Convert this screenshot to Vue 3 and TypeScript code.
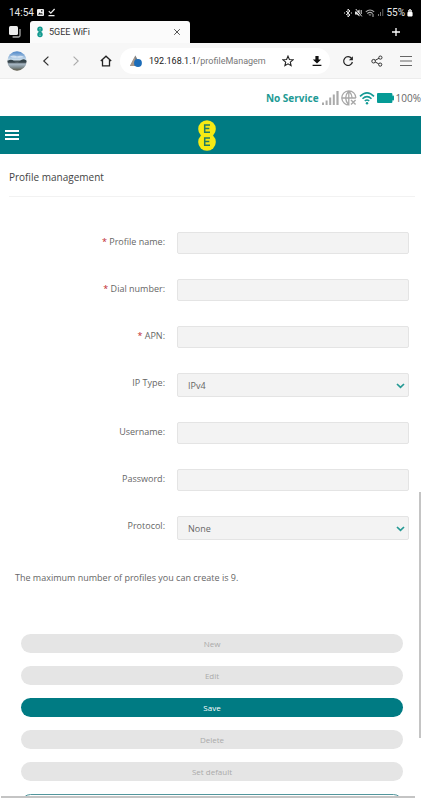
<script setup lang="ts">
import { reactive } from 'vue'

interface Field {
  id: string
  label: string
  required?: boolean
  options?: string[]
}

const fields: Field[] = [
  { id: 'profileName', label: 'Profile name:', required: true },
  { id: 'dialNumber', label: 'Dial number:', required: true },
  { id: 'apn', label: 'APN:', required: true },
  { id: 'ipType', label: 'IP Type:', options: ['IPv4'] },
  { id: 'username', label: 'Username:' },
  { id: 'password', label: 'Password:' },
  { id: 'protocol', label: 'Protocol:', options: ['None'] },
]

const values = reactive<Record<string, string>>({
  profileName: '',
  dialNumber: '',
  apn: '',
  ipType: 'IPv4',
  username: '',
  password: '',
  protocol: 'None',
})

const actions = [
  { label: 'New', kind: 'disabled' },
  { label: 'Edit', kind: 'disabled' },
  { label: 'Save', kind: 'primary' },
  { label: 'Delete', kind: 'disabled' },
  { label: 'Set default', kind: 'disabled' },
  { label: '', kind: 'outline' },
]
</script>

<template>
  <div class="screen">
    <div class="status">
      <span>14:54</span>
      <svg width="9" height="9" viewBox="0 0 9 9"><rect x="1" y="1" width="7" height="7" rx="1" fill="#eee" /><path d="M2 6.6 3.6 4.4 5 5.8 5.8 5 7 6.6z" fill="#111" /><rect x="5" y="2.2" width="1.4" height="1.4" fill="#111" /></svg>
      <svg width="9" height="9" viewBox="0 0 9 9" fill="none" stroke="#eee" stroke-width="1.2"><path d="M1.8 3.2 3.8 5.2 7.6 1M1.5 7.7h6" /></svg>
      <span class="spacer"></span>
      <svg width="8" height="10" viewBox="0 0 8 10" fill="none" stroke="#ddd" stroke-width="1"><path d="M2 3l4 4-2 2V1l2 2-4 4" /><path d="M.6 4.4v1.2M7.4 4.4v1.2" /></svg>
      <svg width="9" height="10" viewBox="0 0 9 10"><path d="M1 3.6h2L5.6 1.6v6.8L3 6.4H1z" fill="#ddd" /><path d="M1 1l6.6 8" stroke="#000" stroke-width="1" /><path d="M1.8 1l6 7.4M7.2 2v4" stroke="#ddd" stroke-width="1" /></svg>
      <svg width="10" height="10" viewBox="0 0 10 10" fill="none" stroke="#aaa" stroke-width="1.1"><path d="M.8 3.8Q5 .2 9.2 3.8M2.3 5.6Q5 3.2 7.7 5.6M3.8 7.2Q5 6.2 6.2 7.2" /><path d="M8 6v3" /></svg>
      <svg width="7" height="9" viewBox="0 0 7 9" fill="#777"><path d="M1 6h1v2H1zM3 4h1v4H3zM5.4 1h.8v7h-.8z" /></svg>
      <span>55%</span>
      <svg width="6" height="9" viewBox="0 0 6 9"><path d="M2 1h2v1h1v2H1V2h1z" fill="#bbb" /><rect x=".4" y="4" width="5.2" height="4.4" rx=".8" fill="#fff" /></svg>
    </div>

    <div class="tabs">
      <button class="icon-btn windows" aria-label="Tabs">
        <svg width="14" height="14" viewBox="0 0 14 14"><path d="M12 4v6.5q0 1.5-1.5 1.5H4.6" fill="none" stroke="#aaa" stroke-width="1.3" /><rect x="1" y="1" width="9" height="9" rx="1.5" fill="#eee" /></svg>
      </button>
      <div class="tab">
        <svg width="8" height="12" viewBox="0 0 8 12"><circle cx="4" cy="3.3" r="2.7" fill="#10998f" /><circle cx="4" cy="8.5" r="2.7" fill="#10998f" /><path d="M3 2.5h2M3 4h2M3 8h2M3 9.5h2" stroke="#86ccc4" stroke-width=".6" /></svg>
        <span class="tab-title">5GEE WiFi</span>
        <button class="icon-btn" aria-label="Close tab">
          <svg width="8" height="8" viewBox="0 0 8 8" stroke="#555" stroke-width="1"><path d="M1.2 1.2l5.6 5.6M6.8 1.2 1.2 6.8" /></svg>
        </button>
      </div>
      <button class="icon-btn plus" aria-label="New tab">
        <svg width="10" height="10" viewBox="0 0 10 10" stroke="#fff" stroke-width="1.3"><path d="M5 1v8M1 5h8" /></svg>
      </button>
    </div>

    <div class="toolbar">
      <button class="icon-btn avatar" aria-label="Profile">
        <svg width="20" height="20" viewBox="0 0 20 20">
          <defs>
            <linearGradient id="lake" x1="0" y1="0" x2="0" y2="1">
              <stop offset="0" stop-color="#4d86c8" /><stop offset=".45" stop-color="#cfe0ec" /><stop offset=".5" stop-color="#3c4a50" /><stop offset=".58" stop-color="#5d6a70" /><stop offset=".66" stop-color="#a9b9c6" /><stop offset=".82" stop-color="#7f8d92" /><stop offset="1" stop-color="#5b5746" />
            </linearGradient>
          </defs>
          <circle cx="10" cy="10" r="9.7" fill="url(#lake)" />
          <path d="M1 10Q4 7.5 7 10.3T13 10t6-.8v2.3H1z" fill="#34434a" />
          <path d="M3 5.5q4-2 7 0 4-1.6 7 .6-4 1-7 .4-4 .8-7-1z" fill="#fff" opacity=".55" />
        </svg>
      </button>
      <button class="icon-btn" aria-label="Back"><svg width="12" height="12" viewBox="0 0 12 12" fill="none" stroke="#333" stroke-width="1.2"><path d="M8.4 1.6 3.8 6l4.6 4.4" /></svg></button>
      <button class="icon-btn" aria-label="Forward"><svg width="12" height="12" viewBox="0 0 12 12" fill="none" stroke="#aaa" stroke-width="1.1"><path d="M3.6 1.6 8.2 6l-4.6 4.4" /></svg></button>
      <button class="icon-btn" aria-label="Home"><svg width="12" height="12" viewBox="0 0 12 12" fill="none" stroke="#222" stroke-width="1.3"><path d="M.8 6 6 1.2 11.2 6M2.5 5v5.9h7V5" /></svg></button>
      <div class="address">
        <svg width="14" height="14" viewBox="0 0 14 14"><path d="M6.4 1.5 12 12H1z" fill="#7b8288" /><path d="M6.4 1.5 3.2 7.6 1 12h4z" fill="#a8988b" /><circle cx="9" cy="9" r="3.9" fill="#1c6cb8" /></svg>
        <span class="url"><span class="host">192.168.1.1</span>/profileManagem</span>
        <button class="icon-btn" aria-label="Bookmark"><svg width="12" height="12" viewBox="0 0 12 12" fill="none" stroke="#222" stroke-width="1.1"><path d="M6 1.1 7.4 4.5 11 4.8 8.3 7.1l.8 3.6L6 8.8l-3.1 1.9.8-3.6L1 4.8l3.6-.3z" /></svg></button>
        <button class="icon-btn download" aria-label="Downloads"><svg width="12" height="12" viewBox="0 0 12 12" fill="#111"><path d="M4.4 1h3.2v3.6h2.6L6 8.5 1.8 4.6h2.6zM1.6 9.7h8.8v1.2H1.6z" /></svg></button>
      </div>
      <div class="tools">
        <button class="icon-btn" aria-label="Reload"><svg width="12" height="12" viewBox="0 0 12 12"><path d="M9.6 3.4A4.4 4.4 0 1 0 10.4 7" fill="none" stroke="#222" stroke-width="1.2" /><path d="M10.9 1.2v4H6.9z" fill="#222" /></svg></button>
        <button class="icon-btn" aria-label="Share"><svg width="12" height="12" viewBox="0 0 12 12" fill="none" stroke="#333" stroke-width="1"><circle cx="2.6" cy="6.2" r="1.8" /><circle cx="9.4" cy="2.6" r="1.6" /><circle cx="9.2" cy="9.6" r="1.6" /><path d="M4.2 5.3 8 3.3M4.2 7l3.6 1.9" /></svg></button>
        <button class="icon-btn" aria-label="Menu"><svg width="12" height="10" viewBox="0 0 12 10" stroke="#666" stroke-width="1"><path d="M0 .5h12M0 5h12M0 9.5h12" /></svg></button>
      </div>
    </div>

    <div class="site">
      <div class="network">
        <b>No Service</b>
        <svg width="17" height="14" viewBox="0 0 17 14" fill="#aaa"><path d="M0 11.5h2V14H0zM3.6 9.5h2V14h-2zM7.2 6.5h2V14h-2zM10.8 3.5h2V14h-2zM14.4 0h2.2v14h-2.2z" /></svg>
        <svg width="16" height="16" viewBox="0 0 16 16" fill="none" stroke="#a8a8a8" stroke-width="1.3"><path d="M14.8 8A7 7 0 1 0 8.5 14.8M1 8h13.8M7.8 1v13.8M7.8 1Q1.5 8 7.8 14.8M7.8 1q3.4 3.6 3.3 7" /><path d="M10 10l4.6 4.6M14.6 10 10 14.6" stroke-width="1.4" /></svg>
        <svg width="16" height="14" viewBox="0 0 16 14" fill="none" stroke="#149a95" stroke-width="1.6"><path d="M1 5.4Q8-1.6 15 5.4M3.5 7.8q4.5-4.4 9 0M5.8 10q2.2-2 4.4 0" /><circle cx="8" cy="12.2" r="1.2" fill="#149a95" stroke="none" /></svg>
        <svg width="17" height="10" viewBox="0 0 17 10" fill="#059b96"><rect x="0" y="0" width="15.4" height="10" rx="1" /><rect x="15" y="2.5" width="2" height="5" rx=".8" /></svg>
        <span>100%</span>
      </div>

      <header class="banner">
        <button class="icon-btn" aria-label="Open navigation"><svg width="14" height="10" viewBox="0 0 14 10" fill="#fff"><path d="M0 0h14v2H0zM0 4h14v2H0zM0 8h14v2H0z" /></svg></button>
        <a class="logo" href="#" aria-label="Home page">
          <svg width="18" height="31" viewBox="0 0 18 31"><circle cx="9" cy="9" r="8.8" fill="#f6ea13" /><circle cx="9" cy="22" r="8.8" fill="#f6ea13" /><path d="M12 5H6.7v7.2H12M6.7 8.5h4.6M12 18H6.7v7.2H12M6.7 21.5h4.6" fill="none" stroke="#237b63" stroke-width="1.5" /></svg>
        </a>
      </header>

      <h1>Profile management</h1>

      <form @submit.prevent>
        <div class="fields">
          <div v-for="f in fields" :key="f.id" class="row">
            <label :for="f.id"><span v-if="f.required" class="star">* </span>{{ f.label }}</label>
            <div v-if="f.options" class="select">
              <select :id="f.id" v-model="values[f.id]">
                <option v-for="o in f.options" :key="o">{{ o }}</option>
              </select>
              <svg class="chevron" width="9" height="6" viewBox="0 0 9 6" fill="none" stroke="#249994" stroke-width="1.7"><path d="M1 1l3.5 3.4L8 1" /></svg>
            </div>
            <input v-else :id="f.id" v-model="values[f.id]" :type="f.id === 'password' ? 'password' : 'text'" />
          </div>
        </div>
        <p>The maximum number of profiles you can create is 9.</p>
        <div class="actions">
          <button v-for="a in actions" :key="a.label" type="button" :class="['action', a.kind]" :disabled="a.kind === 'disabled'">{{ a.label }}</button>
        </div>
      </form>
      <div class="bar-v"></div>
      <div class="bar-h"></div>
    </div>
  </div>
</template>

<style>
body {
  margin: 0;
  background: #fff;
}
</style>

<style scoped>
* {
  box-sizing: border-box;
}
.screen {
  height: 100vh;
  display: flex;
  flex-direction: column;
  overflow: hidden;
  font-family: "Open Sans", "Noto Sans", sans-serif;
}
svg {
  display: block;
  flex: none;
}
.icon-btn {
  display: flex;
  padding: 0;
  border: 0;
  background: none;
}
.status {
  flex: none;
  height: 21px;
  padding: 4px 8px 0 9px;
  display: flex;
  align-items: center;
  gap: 2px;
  background: #000;
  color: #e8e8e8;
  font: 10px/16px Roboto, sans-serif;
}
.spacer {
  flex: 1;
}
.tabs {
  flex: none;
  height: 22px;
  display: flex;
  align-items: center;
  background: #000;
}
.windows {
  margin: 0 8px;
}
.tab {
  width: 38%;
  height: 22px;
  padding: 0 9px 0 6px;
  display: flex;
  align-items: center;
  gap: 5px;
  background: #fbfbfb;
  border-radius: 3px 3px 0 0;
}
.tab-title {
  flex: 1;
  color: #333;
  font: 9px/14px Roboto, sans-serif;
}
.plus {
  margin: 0 20px 0 auto;
}
.toolbar {
  flex: none;
  height: 36px;
  padding: 0 9px 0 7px;
  display: flex;
  align-items: center;
  background: #f7f7f7;
  border-bottom: 1px solid #ececec;
}
.avatar {
  margin-right: 13px;
}
.toolbar > .icon-btn + .icon-btn + .icon-btn {
  margin-left: 18px;
}
.address {
  flex: 1;
  min-width: 0;
  height: 26px;
  margin: 0 12px 0 8px;
  padding: 0 7px 0 9px;
  display: flex;
  align-items: center;
  background: #fff;
  border-radius: 13px;
}
.url {
  flex: 1;
  min-width: 0;
  margin: 0 6px;
  overflow: hidden;
  white-space: nowrap;
  color: #777;
  font: 9px/14px Roboto, sans-serif;
}
.host {
  color: #222;
}
.download {
  margin-left: 17px;
}
.tools {
  display: flex;
  align-items: center;
  gap: 17px;
}
.site {
  position: relative;
  flex: 1;
  min-height: 0;
  overflow: hidden;
}
.network {
  height: 37px;
  display: flex;
  align-items: center;
  justify-content: flex-end;
  gap: 2px;
  color: #666;
  font-size: 10px;
}
.network b {
  margin-right: 1px;
  color: #1d9a94;
}
.banner {
  height: 38px;
  padding: 0 5px;
  display: grid;
  grid-template-columns: 1fr auto 1fr;
  align-items: center;
  background: #007b83;
}
.logo {
  margin-right: 8px;
}
h1 {
  margin: 0 6px 0 9px;
  padding: 14px 0 10px;
  border-bottom: 1px solid #f2f2f2;
  color: #444;
  font-size: 10px;
  line-height: 18px;
  font-weight: 400;
}
.fields {
  display: flex;
  flex-direction: column;
  gap: 25px;
  padding: 35px 12px 0;
}
.row {
  display: grid;
  grid-template-columns: 153px 1fr;
  column-gap: 12px;
  align-items: start;
}
label {
  text-align: right;
  color: #666;
  font-size: 9px;
  line-height: 20px;
}
.star {
  color: #c0272d;
}
input,
select {
  display: block;
  width: 100%;
  height: 22px;
  margin: 0;
  padding: 0 10px;
  border: 1px solid #e4e4e4;
  border-radius: 2px;
  background: #f3f3f3;
  color: #666;
  font: inherit;
  font-size: 9px;
  appearance: none;
}
select {
  height: 24px;
}
.select {
  position: relative;
}
.chevron {
  position: absolute;
  right: 4px;
  top: 10px;
  pointer-events: none;
}
p {
  margin: 29px 15px 47px;
  color: #666;
  font-size: 9px;
  line-height: 18px;
}
.actions {
  display: flex;
  flex-direction: column;
  gap: 13px;
  padding: 0 18px 0 21px;
}
.action {
  flex: none;
  height: 19px;
  padding: 0;
  border: 0;
  border-radius: 10px;
  background: #e5e5e5;
  color: #aaa;
  font: inherit;
  font-size: 8px;
}
.primary {
  background: #007b83;
  color: #fff;
}
.outline {
  border: 1px solid #52969c;
  background: #fff;
}
.bar-v {
  position: absolute;
  right: 0;
  top: 57.5%;
  width: 2px;
  height: 34.2%;
  background: #c4c4c4;
}
.bar-h {
  position: absolute;
  left: 1px;
  right: 6px;
  bottom: 0;
  height: 2px;
  background: #c4c4c4;
}
</style>
